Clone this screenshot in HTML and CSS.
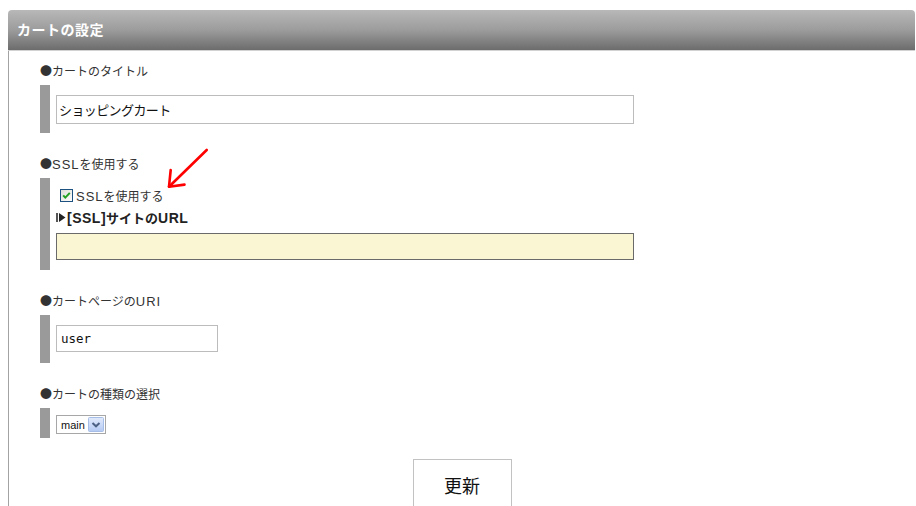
FILE: index.html
```html
<!DOCTYPE html>
<html lang="ja">
<head>
<meta charset="utf-8">
<title>カートの設定</title>
<link rel="stylesheet" href="styles.css">
</head>
<body>
<div class="panel">
  <h2 class="panel-title">カートの設定</h2>
  <div class="panel-body">
    <div class="field">
      <div class="field-label"><span class="bullet">●</span>カートのタイトル</div>
      <div class="field-box box-title">
        <input class="text-input input-title" type="text" value="ショッピングカート">
      </div>
    </div>

    <div class="field">
      <div class="field-label"><span class="bullet">●</span><span class="latin">SSL</span>を使用する</div>
      <div class="field-box box-ssl">
        <label class="check-row">
          <svg class="check-icon" width="13" height="13" viewBox="0 0 13 13">
            <defs>
              <linearGradient id="cbg" x1="0" y1="0" x2="1" y2="1">
                <stop offset="0" stop-color="#dcdcd7"/>
                <stop offset="1" stop-color="#ffffff"/>
              </linearGradient>
            </defs>
            <rect x="0.5" y="0.5" width="12" height="12" fill="url(#cbg)" stroke="#1c5180"/>
            <path d="M3.2 6.4 L5.3 8.6 L9.8 3.9" fill="none" stroke="#21a121" stroke-width="2"/>
          </svg>
          <span><span class="latin">SSL</span>を使用する</span>
        </label>
        <div class="sub-title">
          <svg class="sub-icon" width="10" height="9" viewBox="0 0 10 9">
            <rect x="0" y="0" width="2" height="9" fill="#555"/>
            <polygon points="3,0 9.5,4.5 3,9" fill="#222"/>
          </svg>
          <span><span class="latin">[SSL]</span>サイトの<span class="latin">URL</span></span>
        </div>
        <input class="text-input input-url" type="text" value="">
      </div>
    </div>

    <div class="field">
      <div class="field-label"><span class="bullet">●</span>カートページの<span class="latin">URI</span></div>
      <div class="field-box box-uri">
        <input class="text-input input-uri" type="text" value="user">
      </div>
    </div>

    <div class="field field-last">
      <div class="field-label"><span class="bullet">●</span>カートの種類の選択</div>
      <div class="field-box box-select">
        <select class="select-type">
          <option>main</option>
        </select>
      </div>
    </div>

    <button class="submit-btn" type="button">更新</button>
  </div>

  <svg class="annot-arrow" width="46" height="46" viewBox="0 0 46 46">
    <g fill="none" stroke="#ff0000" stroke-width="2.6" stroke-linecap="round" stroke-linejoin="round">
      <path d="M41.7 4 L4 40.7"/>
      <path d="M5.7 24 L4 40.7 L19.5 38.6"/>
    </g>
  </svg>
</div>
</body>
</html>
```

FILE: styles.css
```css
html, body {
  margin: 0;
  padding: 0;
  background: #ffffff;
}

body {
  font-family: "Liberation Sans", "Noto Sans CJK JP", sans-serif;
  color: #222222;
}

.panel {
  position: relative;
  margin: 10px 0 0 8px;
  width: 907px;
}

.panel-title {
  margin: 0;
  height: 40px;
  line-height: 39px;
  padding-left: 9px;
  font-family: "Noto Sans CJK JP", sans-serif;
  font-size: 14px;
  font-weight: bold;
  letter-spacing: 0.5px;
  color: #ffffff;
  background: linear-gradient(to bottom, #b8b8b8 0%, #9c9c9c 50%, #6c6c6c 100%);
  border-radius: 4px 4px 0 0;
  border-bottom: 1px solid #d2d2d2;
}

.panel-body {
  border-left: 1px solid #a3a3a3;
  padding: 11px 0 0 31px;
  display: flex;
  flex-direction: column;
}

.field {
  margin-bottom: 22px;
}

.field-last {
  margin-bottom: 0;
}

.field-label {
  font-size: 12px;
  line-height: 18px;
  height: 18px;
  margin-bottom: 5px;
  color: #333333;
}

.bullet {
  font-family: "Noto Sans CJK JP", sans-serif;
  color: #333333;
}

.latin {
  font-size: 13px;
  letter-spacing: 1px;
}

.field-box {
  border-left: 10px solid #9a9a9a;
  padding-left: 6px;
  display: flex;
  flex-direction: column;
  align-items: flex-start;
}

.box-title {
  padding-top: 10px;
  padding-bottom: 9px;
}

.box-ssl {
  padding-top: 8px;
  padding-bottom: 10px;
}

.box-uri {
  padding-top: 10px;
  padding-bottom: 11px;
}

.box-select {
  padding-top: 7px;
  padding-bottom: 4px;
}

.text-input {
  box-sizing: border-box;
  margin: 0;
  border: 1px solid #bcbcbc;
  background: #ffffff;
  outline: none;
  color: #111111;
}

.input-title {
  width: 578px;
  height: 29px;
  padding: 0 2px;
  font-family: "Noto Sans CJK JP", sans-serif;
  font-size: 13px;
  letter-spacing: -0.6px;
}

.input-url {
  width: 578px;
  height: 27px;
  margin-top: 7px;
  border-color: #6a6a6a;
  background: #faf6d4;
}

.input-uri {
  width: 162px;
  height: 27px;
  padding: 0 4px;
  font-family: "DejaVu Sans Mono", "Liberation Mono", monospace;
  font-size: 12.5px;
}

.check-row {
  display: flex;
  align-items: center;
  height: 18px;
  padding-left: 4px;
  font-size: 12px;
  color: #333333;
}

.check-icon {
  display: block;
  margin-right: 3px;
}

.sub-title {
  display: flex;
  align-items: center;
  height: 18px;
  margin-top: 4px;
  font-size: 13px;
  font-weight: bold;
  color: #222222;
}

.sub-title .latin {
  font-size: 14px;
  letter-spacing: 0.5px;
}

.sub-icon {
  display: block;
  margin-right: 1px;
}

.select-type {
  -webkit-appearance: none;
  appearance: none;
  box-sizing: border-box;
  width: 50px;
  height: 19px;
  margin: 0;
  padding: 0 0 0 4px;
  border: 1px solid #a7a7a7;
  border-radius: 0;
  font-family: "Liberation Sans", sans-serif;
  font-size: 11px;
  color: #111111;
  background: #ffffff url("data:image/svg+xml,%3Csvg xmlns='http://www.w3.org/2000/svg' width='16' height='15' viewBox='0 0 16 15'%3E%3Cdefs%3E%3ClinearGradient id='g' x1='0' y1='0' x2='0' y2='1'%3E%3Cstop offset='0' stop-color='%23e2ebfc'/%3E%3Cstop offset='1' stop-color='%23b4c9f3'/%3E%3C/linearGradient%3E%3C/defs%3E%3Crect x='0.5' y='0.5' width='15' height='14' rx='1' fill='url(%23g)' stroke='%23a6bde8'/%3E%3Cpath d='M4.5 6 L8 9.3 L11.5 6' fill='none' stroke='%234d6185' stroke-width='2'/%3E%3C/svg%3E") no-repeat right 1px center;
  outline: none;
}

.submit-btn {
  box-sizing: border-box;
  align-self: center;
  margin: 21px 0 0 -31px;
  width: 99px;
  height: 48px;
  padding: 4px 0 0;
  border: 1px solid #c2c2c2;
  background: #ffffff;
  font-family: "Noto Sans CJK JP", sans-serif;
  font-size: 18px;
  color: #111111;
  line-height: 1;
}

.annot-arrow {
  position: absolute;
  left: 157px;
  top: 136px;
}
```
